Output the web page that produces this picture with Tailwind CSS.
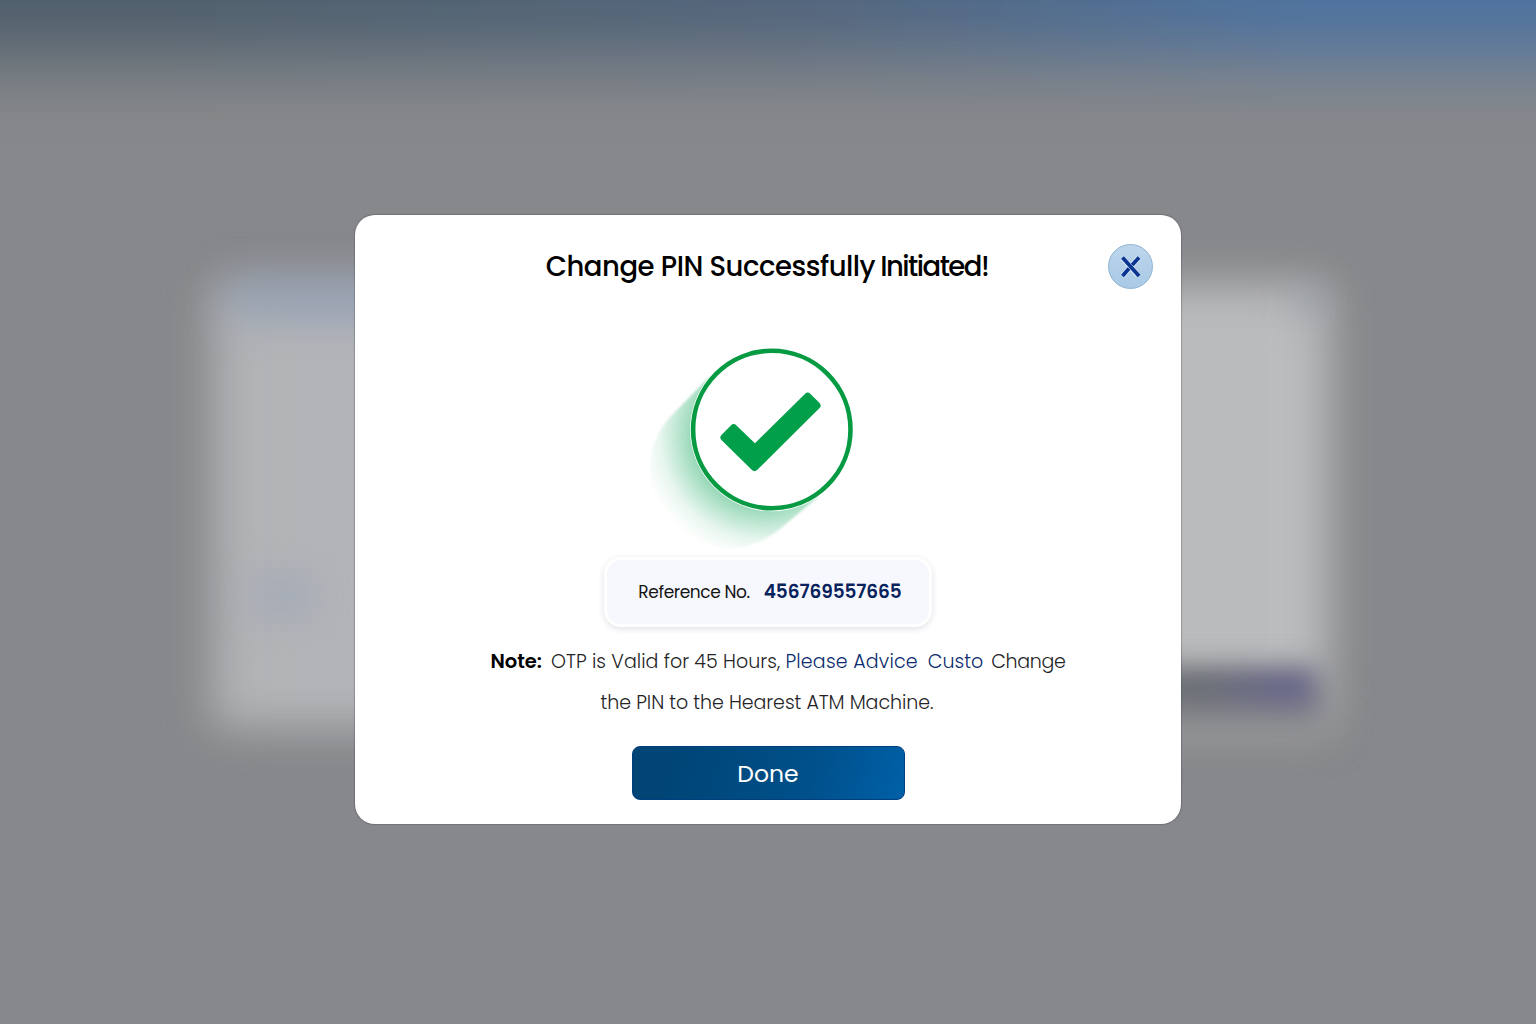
<!DOCTYPE html>
<html lang="en">
<head>
<meta charset="utf-8">
<title>Change PIN</title>
<script src="https://cdn.jsdelivr.net/npm/@tailwindcss/browser@4"></script>
</head>
<body class="font-[Poppins,Inter,sans-serif]">
<div class="relative flex h-[1024px] w-[1536px] justify-center overflow-hidden bg-[#87888b] pt-[215px]">
  <!-- dimmed page behind the dialog -->
  <div class="absolute -left-24 -top-24 h-[155px] w-[1728px] bg-linear-to-r from-[#4f5f6b] from-15% via-[#52657c] via-52% to-[#4d729f] to-80% blur-[36px]"></div>
  <div class="absolute left-[212px] top-[284px] h-[444px] w-[1118px] bg-linear-to-r from-[#b2b3b6] to-[#bbbcbd] blur-[22px]"></div>
  <div class="absolute left-[230px] top-[276px] h-[46px] w-[400px] bg-[#8c9cb8]/60 blur-[20px]"></div>
  <div class="absolute left-[1290px] top-[284px] h-[40px] w-[35px] bg-[#8b99a5]/35 blur-[16px]"></div>
  <div class="absolute left-[255px] top-[572px] h-[48px] w-[60px] bg-[#98a3ba]/50 blur-[18px]"></div>
  <div class="absolute left-[1130px] top-[678px] h-[60px] w-[200px] bg-[#87888b] blur-[18px]"></div>
  <div class="absolute left-[1160px] top-[669px] h-[38px] w-[155px] bg-linear-to-r from-[#6a6d75] from-30% to-[#676687] to-75% blur-[13px]"></div>

  <main class="relative flex h-[609px] w-[826px] flex-col items-center rounded-[20px] bg-white shadow-[0_0_1px_1px_rgba(60,62,70,0.3)]">
    <h1 class="mt-[31px] flex h-[42px] items-center gap-[5px] whitespace-nowrap pr-[2px] text-[27.5px] font-medium text-black"><span class="tracking-[-0.47px]">Change PIN Successfully</span><span class="tracking-[-1.5px]">Initiated!</span></h1>
    <button aria-label="Close" class="absolute right-[28px] top-[29px] flex size-[45px] items-center justify-center rounded-full border border-[#8fb4d3] bg-linear-to-b from-[#bdd6ec] to-[#a9c9e5]">
      <svg class="size-[45px] shrink-0" viewBox="0 0 45 45" fill="none"><path d="M14.5 14 30.5 32M30.5 14 14.5 32" stroke="#d9e9f8" stroke-width="5.5"/><path d="M14.5 13.5 31 32" stroke="#0b3590" stroke-width="3.8"/><path d="M31 13.5 24.2 21M21 24.5 14.5 32" stroke="#0b3590" stroke-width="3.8"/></svg>
    </button>
    <svg class="mt-[42px] h-[225px] w-[226px] shrink-0" viewBox="655 330 226 225" overflow="visible">
      <defs>
        <radialGradient id="cast" gradientUnits="userSpaceOnUse" cx="764" cy="436" r="124"><stop offset=".56" stop-color="#0f9f50" stop-opacity=".43"/><stop offset=".68" stop-color="#0f9f50" stop-opacity=".28"/><stop offset=".84" stop-color="#0f9f50" stop-opacity=".09"/><stop offset="1" stop-color="#0f9f50" stop-opacity="0"/></radialGradient>
        <filter id="soft"><feGaussianBlur stdDeviation="1.2"/></filter>
      </defs>
      <path d="M709 377 673 414A79 79 0 0 0 650 469A79 79 0 0 0 729 548Q756 548 780 529L818 497L772 430Z" fill="url(#cast)" filter="url(#soft)"/>
      <circle cx="771.8" cy="429.5" r="81.7" fill="#fff"/>
      <circle cx="771.8" cy="429.5" r="78.7" fill="#fff" stroke="#069b43" stroke-width="4.6"/>
      <path d="M724.5 437.5 733.7 428.3 755 448.8 807.7 396.8 816.5 405.5 754.5 467Z" fill="#029f4a" stroke="#029f4a" stroke-width="8" stroke-linejoin="round"/>
    </svg>
    <section class="mt-[2px] flex h-[70px] w-[328px] shrink-0 items-center justify-center gap-[14px] whitespace-nowrap rounded-[17px] border-[3px] border-white bg-[#f6f8fe] pl-[4px] shadow-[0_2px_6px_rgba(30,40,80,0.14)]">
      <span class="pt-[2px] text-[17px] tracking-[-0.4px] text-[#151515]">Reference No.</span>
      <span class="text-[18.5px] font-semibold tracking-[-0.1px] text-[#08225c]">456769557665</span>
    </section>
    <p class="mt-[15px] flex h-[41px] items-center whitespace-nowrap pl-[20px] text-[19px] font-light text-[#242426]"><b class="mr-[9px] pb-[2px] text-[19.5px] font-semibold text-black">Note:</b><span class="mr-[5px] tracking-[0.05px]">OTP is Valid for 45 Hours,</span><span class="mr-[10px] tracking-[0.2px] text-[#0b2c6e]">Please Advice</span><span class="mr-[8px] text-[#0b2c6e]">Custo</span><span class="tracking-[-0.3px]">Change</span></p>
    <p class="flex h-[41px] items-center whitespace-nowrap pr-[2px] text-[19px] font-light tracking-[-0.05px] text-[#242426]">the PIN to the Hearest ATM Machine.</p>
    <button class="mt-[22px] flex h-[54px] w-[273px] shrink-0 items-center justify-center rounded-[8px] border border-[#003f7e] bg-linear-105 from-[#004576] from-15% via-[#00508a] via-65% to-[#0060a8] pt-[2px] text-[23.5px] text-white">Done</button>
  </main>
</div>
</body>
</html>
